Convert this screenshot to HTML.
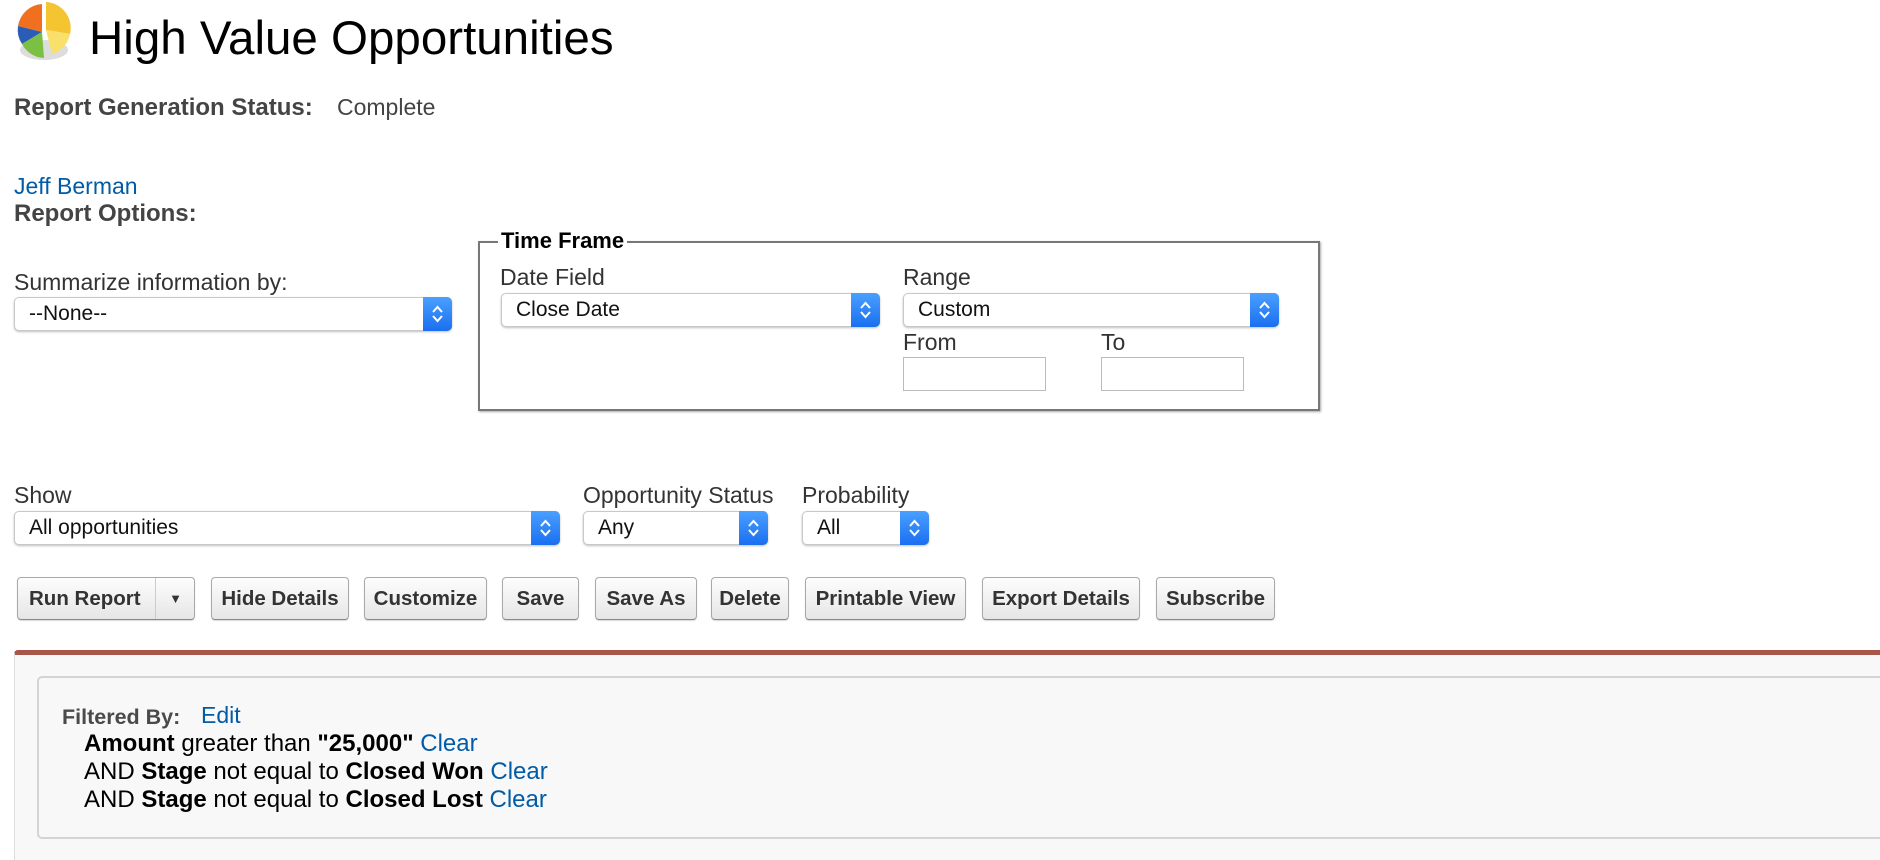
<!DOCTYPE html>
<html><head><meta charset="utf-8"><style>
*{box-sizing:border-box;margin:0;padding:0}
body{width:1880px;height:854px;overflow:hidden;background:#fff;font-family:"Liberation Sans",Arial,sans-serif;color:#222;position:relative}
.a{position:absolute;white-space:nowrap}
.lbl{font-size:23px;color:#333;line-height:1}
.b{font-weight:bold}
.sel{position:absolute;border:1px solid #c8c8c8;border-radius:5px;background:#fff;box-shadow:0 1px 2px rgba(0,0,0,.25);font-size:21px;color:#111;padding-left:14px;display:flex;align-items:center}
.sel .st{position:absolute;right:-1px;top:-1px;bottom:-1px;width:29px;background:linear-gradient(#4aa0ff,#1a6ff0);border-radius:0 5px 5px 0}
.sel .st svg{position:absolute;left:7px;top:50%;margin-top:-10px}
.inp{position:absolute;border:1px solid #bbb;background:#fff}
.btn{position:absolute;top:577px;height:43px;border:1px solid #a9a9a9;border-bottom-color:#888;border-radius:4px;background:linear-gradient(#fdfdfd,#e6e6e6);font-weight:bold;font-size:20.5px;color:#333;display:flex;align-items:center;justify-content:center;box-shadow:0 1px 1px rgba(0,0,0,.15)}
a{color:#015ba7;text-decoration:none}
</style></head><body>
<svg class="a" style="left:12px;top:0" width="68" height="64" viewBox="0 0 68 64">
<ellipse cx="32" cy="50" rx="24" ry="10" fill="#ddd"/>
<path d="M30 32 L6 26 A26 26 0 0 1 30 4 Z" fill="#f07020"/>
<path d="M30 32 L6 26 A26 26 0 0 0 10 44 Z" fill="#2a5cb8"/>
<path d="M30 32 L10 44 A26 26 0 0 0 32 58 Z" fill="#7bc043"/>
<path d="M34 30 L34 2 A26 26 0 0 1 58 34 Z" fill="#f5c431"/>
<path d="M34 30 L58 34 A26 26 0 0 1 40 54 Z" fill="#f8e06a"/>
</svg>
<div class="a" style="left:89px;top:11px;font-size:47.5px;color:#000">High Value Opportunities</div>
<div class="a lbl b" style="left:14px;top:96px;color:#444;font-size:24px">Report Generation Status:</div>
<div class="a lbl" style="left:337px;top:96px;color:#444">Complete</div>
<div class="a lbl" style="left:14px;top:175px"><a>Jeff Berman</a></div>
<div class="a lbl b" style="left:14px;top:202px;color:#444;font-size:24px">Report Options:</div>

<div class="a lbl" style="left:14px;top:271px">Summarize information by:</div>
<div class="sel" style="left:14px;top:297px;width:438px;height:34px">--None--<div class="st"><svg width="15" height="20"><path d="M3 8 L7.5 3 L12 8 M3 12 L7.5 17 L12 12" stroke="#fff" stroke-width="2" fill="none"/></svg></div></div>

<div class="a" style="left:478px;top:241px;width:842px;height:170px;border:2px solid #777;box-shadow:1px 1px 2px #aaa"></div>
<div class="a b" style="left:498px;top:228px;background:#fff;padding:0 3px;font-size:22px;color:#000">Time Frame</div>
<div class="a lbl" style="left:500px;top:266px">Date Field</div>
<div class="sel" style="left:501px;top:293px;width:379px;height:34px">Close Date<div class="st"><svg width="15" height="20"><path d="M3 8 L7.5 3 L12 8 M3 12 L7.5 17 L12 12" stroke="#fff" stroke-width="2" fill="none"/></svg></div></div>
<div class="a lbl" style="left:903px;top:266px">Range</div>
<div class="sel" style="left:903px;top:293px;width:376px;height:34px">Custom<div class="st"><svg width="15" height="20"><path d="M3 8 L7.5 3 L12 8 M3 12 L7.5 17 L12 12" stroke="#fff" stroke-width="2" fill="none"/></svg></div></div>
<div class="a lbl" style="left:903px;top:331px">From</div>
<div class="inp" style="left:903px;top:357px;width:143px;height:34px"></div>
<div class="a lbl" style="left:1101px;top:331px">To</div>
<div class="inp" style="left:1101px;top:357px;width:143px;height:34px"></div>

<div class="a lbl" style="left:14px;top:484px">Show</div>
<div class="sel" style="left:14px;top:511px;width:546px;height:34px">All opportunities<div class="st"><svg width="15" height="20"><path d="M3 8 L7.5 3 L12 8 M3 12 L7.5 17 L12 12" stroke="#fff" stroke-width="2" fill="none"/></svg></div></div>
<div class="a lbl" style="left:583px;top:484px">Opportunity Status</div>
<div class="sel" style="left:583px;top:511px;width:185px;height:34px">Any<div class="st"><svg width="15" height="20"><path d="M3 8 L7.5 3 L12 8 M3 12 L7.5 17 L12 12" stroke="#fff" stroke-width="2" fill="none"/></svg></div></div>
<div class="a lbl" style="left:802px;top:484px">Probability</div>
<div class="sel" style="left:802px;top:511px;width:127px;height:34px">All<div class="st"><svg width="15" height="20"><path d="M3 8 L7.5 3 L12 8 M3 12 L7.5 17 L12 12" stroke="#fff" stroke-width="2" fill="none"/></svg></div></div>

<div class="btn" style="left:17px;width:178px;justify-content:flex-start;padding-left:11px">Run Report<div style="position:absolute;left:137px;top:0;bottom:0;border-left:1px solid #ccc;width:40px;display:flex;align-items:center;justify-content:center;font-size:13px">▼</div></div>
<div class="btn" style="left:211px;width:138px">Hide Details</div>
<div class="btn" style="left:364px;width:123px">Customize</div>
<div class="btn" style="left:502px;width:77px">Save</div>
<div class="btn" style="left:595px;width:102px">Save As</div>
<div class="btn" style="left:711px;width:78px">Delete</div>
<div class="btn" style="left:805px;width:161px">Printable View</div>
<div class="btn" style="left:982px;width:158px">Export Details</div>
<div class="btn" style="left:1156px;width:119px">Subscribe</div>

<div class="a" style="left:14px;top:650px;width:1870px;height:210px;background:#f8f8f8;border-top:5px solid #a8554a;border-left:1px solid #ddd;border-radius:4px 0 0 0"></div>
<div class="a" style="left:37px;top:676px;width:1860px;height:163px;border:2px solid #d4d4d4;border-radius:5px;background:#f8f8f8"></div>
<div class="a b" style="left:62px;top:705px;font-size:21.5px;color:#4a4a4a">Filtered By:</div>
<div class="a" style="left:201px;top:702px;font-size:23px"><a>Edit</a></div>
<div class="a" style="left:84px;top:730px;font-size:24px;color:#000"><b>Amount</b> greater than <b>"25,000"</b> <a>Clear</a></div>
<div class="a" style="left:84px;top:758px;font-size:24px;color:#000">AND <b>Stage</b> not equal to <b>Closed Won</b> <a>Clear</a></div>
<div class="a" style="left:84px;top:786px;font-size:24px;color:#000">AND <b>Stage</b> not equal to <b>Closed Lost</b> <a>Clear</a></div>
</body></html>
